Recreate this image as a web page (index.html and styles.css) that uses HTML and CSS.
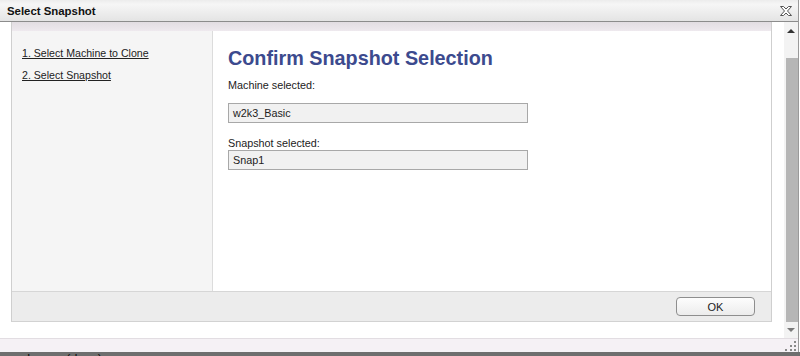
FILE: index.html
```html
<!DOCTYPE html>
<html lang="en">

<head>
    <meta charset="UTF-8">
    <title>Select Snapshot</title>
    <link rel="stylesheet" href="styles.css">
</head>

<body>
    <div class="dialog">
        <div class="titlebar">
            <span class="title">Select Snapshot</span>
            <svg class="close" width="12" height="10" viewBox="0 0 12 10">
                <polygon points="0.5,0.5 3.5,0.5 6,3 8.5,0.5 11.5,0.5 7.5,5 11.5,9.5 8.5,9.5 6,7 3.5,9.5 0.5,9.5 4.5,5"
                    fill="#fff" stroke="#555" stroke-width="1" />
            </svg>
        </div>

        <div class="main">
            <div class="pane">
                <div class="panel">
                    <div class="panel-strip"></div>
                    <div class="panel-body">
                        <div class="nav">
                            <a href="#">1. Select Machine to Clone</a>
                            <a href="#">2. Select Snapshot</a>
                        </div>
                        <div class="content">
                            <h1>Confirm Snapshot Selection</h1>
                            <div class="label">Machine selected:</div>
                            <div class="field">w2k3_Basic</div>
                            <div class="label label-tight">Snapshot selected:</div>
                            <div class="field">Snap1</div>
                        </div>
                    </div>
                    <div class="panel-footer">
                        <button class="btn">OK</button>
                    </div>
                </div>
            </div>

            <div class="scrollbar">
                <div class="sb-top"><span class="arrow-up"></span></div>
                <div class="sb-thumb"></div>
                <div class="sb-bottom"><span class="arrow-down"></span></div>
            </div>
        </div>

        <div class="status">
            <svg class="grip" width="12" height="11" viewBox="0 0 12 11">
                <rect x="9" y="0" width="2" height="2" />
                <rect x="5" y="4" width="2" height="2" />
                <rect x="9" y="4" width="2" height="2" />
                <rect x="0" y="8" width="2" height="2" />
                <rect x="5" y="8" width="2" height="2" />
                <rect x="9" y="8" width="2" height="2" />
            </svg>
        </div>
    </div>

    <div class="under">
        <span class="under-text">Lease (days):</span>
    </div>
</body>

</html>
```

FILE: styles.css
```css
body {
    margin: 0;
    width: 800px;
    height: 356px;
    overflow: hidden;
    background: #fff;
    font-family: "Liberation Sans", Arial, sans-serif;
    color: #222;
}

.dialog {
    width: 798px;
    border-right: 1px solid #9a9a9a;
    background: #fff;
}

.titlebar {
    height: 21px;
    border-bottom: 1px solid #8c8c8c;
    background: linear-gradient(#ececec, #f6f6f6 20%, #e4e4e4);
    display: flex;
    align-items: center;
    justify-content: space-between;
    padding: 0 6px 0 7px;
}

.title {
    font-size: 11.4px;
    font-weight: bold;
    color: #111;
}

.close {
    display: block;
    margin-top: 1px;
}

.main {
    display: flex;
    height: 316px;
}

.pane {
    flex: 1;
    padding: 0 12px 0 11px;
}

.panel {
    border-left: 1px solid #cfcfcf;
    border-right: 1px solid #cfcfcf;
    border-bottom: 1px solid #d2d2d2;
}

.panel-strip {
    height: 9px;
    background: linear-gradient(#e2dde2, #eee9ee);
}

.panel-body {
    display: flex;
    height: 260px;
}

.nav {
    width: 190px;
    padding: 11px 0 0 10px;
    background: #f5f5f5;
    border-right: 1px solid #dcdcdc;
    display: flex;
    flex-direction: column;
}

.nav a {
    font-size: 10.6px;
    line-height: 22px;
    color: #222;
}

.content {
    flex: 1;
    padding: 15px 0 0 15px;
}

h1 {
    margin: 0 0 8px;
    font-size: 19.8px;
    line-height: 24px;
    color: #3c4a8e;
}

.label {
    font-size: 10.8px;
    line-height: 14px;
    margin-bottom: 11px;
}

.label-tight {
    margin-bottom: 0;
}

.field {
    width: 294px;
    height: 18px;
    line-height: 18px;
    padding-left: 4px;
    border: 1px solid #a8a8a8;
    background: #f1f1f1;
    font-size: 10.8px;
    margin-bottom: 13px;
}

.panel-footer {
    height: 30px;
    border-top: 1px solid #d6d6d6;
    background: #ececec;
    display: flex;
    justify-content: flex-end;
    padding: 5px 16px 0 0;
    box-sizing: border-box;
}

.btn {
    width: 79px;
    height: 19px;
    border: 1px solid #8e8e8e;
    border-radius: 4px;
    background: linear-gradient(#fdfdfd, #ececec);
    font-family: "Liberation Sans", Arial, sans-serif;
    font-size: 11px;
    color: #222;
    padding: 0;
}

.scrollbar {
    width: 14px;
    display: flex;
    flex-direction: column;
    background: #f3f3f3;
}

.sb-top {
    height: 36px;
    display: flex;
    justify-content: center;
    padding-top: 7px;
    box-sizing: border-box;
}

.arrow-up {
    width: 0;
    height: 0;
    border-left: 4px solid transparent;
    border-right: 4px solid transparent;
    border-bottom: 4px solid #333;
}

.sb-thumb {
    flex: 1;
    margin-left: 2px;
    background: #b6b6b6;
}

.sb-bottom {
    height: 16px;
    display: flex;
    justify-content: center;
    padding-top: 6px;
    box-sizing: border-box;
}

.arrow-down {
    width: 0;
    height: 0;
    border-left: 4px solid transparent;
    border-right: 4px solid transparent;
    border-top: 4px solid #7a7a7a;
}

.status {
    height: 13px;
    border-top: 1px solid #e2dde2;
    background: #f5f1f5;
    display: flex;
    justify-content: flex-end;
    align-items: flex-end;
    padding-right: 1px;
}

.grip {
    display: block;
    fill: #8a8a8a;
}

.under {
    height: 4px;
    background: #6e6e6e;
    overflow: hidden;
    padding-left: 27px;
}

.under-text {
    display: block;
    margin-top: 0;
    font-size: 13px;
    line-height: 13px;
    color: #111;
}
```
